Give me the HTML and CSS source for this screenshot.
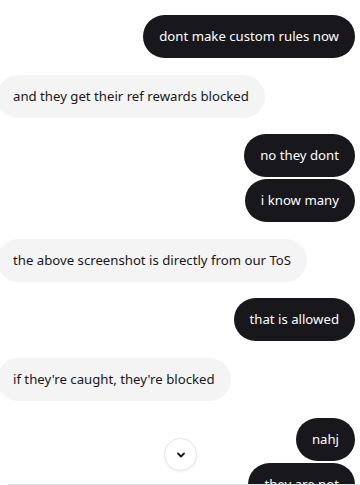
FILE: index.html
```html
<!DOCTYPE html>
<html lang="en">
<head>
    <meta charset="UTF-8">
    <meta name="viewport" content="width=device-width, initial-scale=1.0">
    <title>Chat</title>
    <link rel="stylesheet" href="styles.css">
</head>
<body>
    <div class="chat">
        <div class="messages">
            <div class="msg me">dont make custom rules now</div>
            <div class="msg them">and they get their ref rewards blocked</div>
            <div class="msg me">no they dont</div>
            <div class="msg me next">i know many</div>
            <div class="msg them">the above screenshot is directly from our ToS</div>
            <div class="msg me">that is allowed</div>
            <div class="msg them">if they're caught, they're blocked</div>
            <div class="msg me">nahj</div>
            <div class="msg me next">they are not</div>
        </div>
        <button class="scroll-down" aria-label="Scroll to bottom">
            <svg width="12" height="12" viewBox="0 0 12 12"><path d="M3 4.5 6 7.5 9 4.5" fill="none" stroke="#17171c" stroke-width="1.8" stroke-linecap="round" stroke-linejoin="round"/></svg>
        </button>
    </div>
    <div class="composer"></div>
</body>
</html>
```

FILE: styles.css
```css
body {
    margin: 0;
    padding: 0;
    background: #fff;
    font-family: "Noto Sans", "Open Sans", sans-serif;
    overflow: hidden;
}
.chat {
    position: relative;
    height: 484px;
    overflow: hidden;
}
.messages {
    display: flex;
    flex-direction: column;
    padding: 15px 5px 0 0;
}
.msg {
    font-size: 13.2px;
    line-height: 19px;
    padding: 12px 16px;
    border-radius: 22px;
    max-width: 90%;
    margin-top: 16.6px;
    white-space: nowrap;
}
.msg:first-child {
    margin-top: 0;
}
.msg.next {
    margin-top: 2px;
}
.me {
    align-self: flex-end;
    background: #17171c;
    color: #fff;
}
.them {
    align-self: flex-start;
    background: #f4f4f4;
    color: #17171c;
    margin-left: -3px;
}
.scroll-down {
    position: absolute;
    left: 164px;
    top: 438px;
    width: 33px;
    height: 33px;
    border-radius: 50%;
    border: 1px solid #e6e6e6;
    background: #fff;
    box-shadow: 0 1px 3px rgba(0, 0, 0, 0.06);
    display: flex;
    align-items: center;
    justify-content: center;
    padding: 0;
}
.composer {
    margin-left: 8px;
    border-top: 1px solid #e5e5e5;
    height: 10px;
}
```
